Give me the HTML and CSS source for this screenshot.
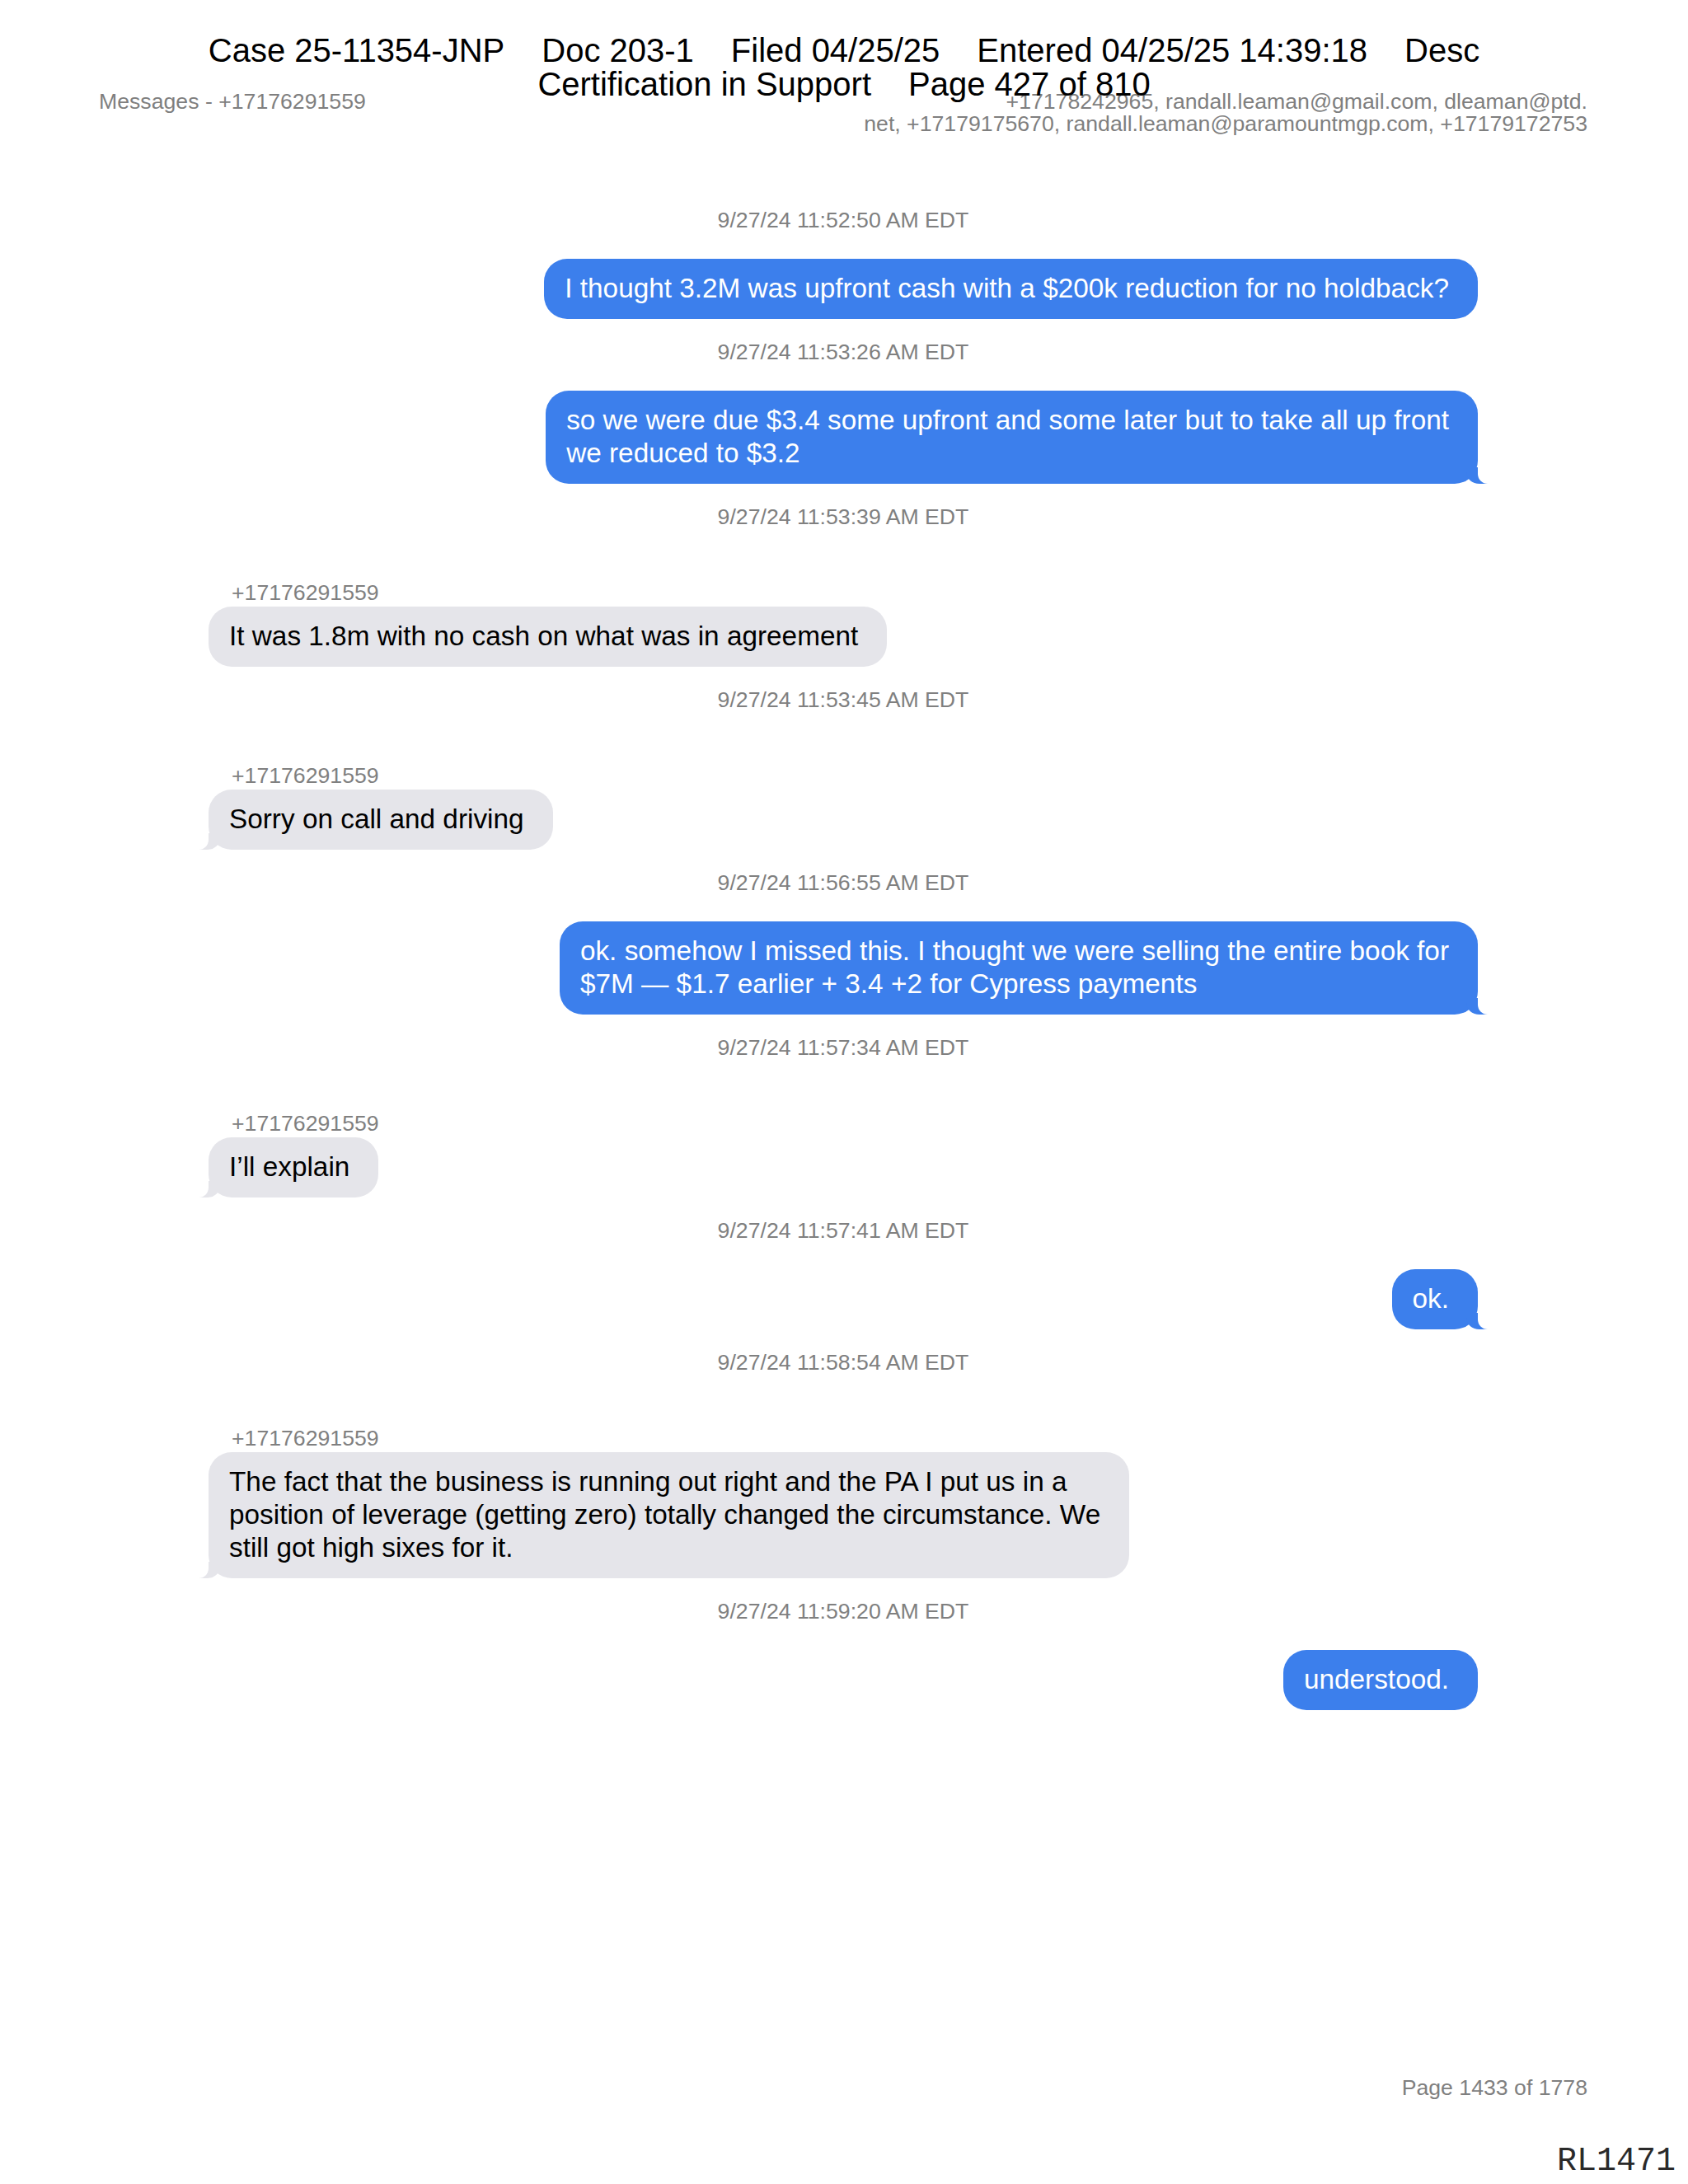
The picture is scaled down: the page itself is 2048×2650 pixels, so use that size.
FILE: index.html
```html
<!DOCTYPE html>
<html lang="en">
<head>
<meta charset="utf-8">
<title>Messages - +17176291559</title>
<link rel="stylesheet" href="styles.css">
</head>
<body>
<div class="page">
  <div class="court-stamp">
    <div class="stamp-line"><span>Case 25-11354-JNP</span><span>Doc 203-1</span><span>Filed 04/25/25</span><span>Entered 04/25/25 14:39:18</span><span>Desc</span></div>
    <div class="stamp-line"><span>Certification in Support</span><span>Page 427 of 810</span></div>
  </div>

  <header class="doc-head">
    <div class="doc-title">Messages - +17176291559</div>
    <div class="participants">
      <span>+17178242965, randall.leaman@gmail.com, dleaman@ptd.</span>
      <span>net, +17179175670, randall.leaman@paramountmgp.com, +17179172753</span>
    </div>
  </header>

  <main class="chat">
    <div class="ts first">9/27/24 11:52:50 AM EDT</div>
    <div class="bubble sent">I thought 3.2M was upfront cash with a $200k reduction for no holdback?</div>

    <div class="ts">9/27/24 11:53:26 AM EDT</div>
    <div class="bubble sent tail">so we were due $3.4 some upfront and some later but to take all up front<br>we reduced to $3.2</div>

    <div class="ts">9/27/24 11:53:39 AM EDT</div>
    <div class="sender">+17176291559</div>
    <div class="bubble recv">It was 1.8m with no cash on what was in agreement</div>

    <div class="ts">9/27/24 11:53:45 AM EDT</div>
    <div class="sender">+17176291559</div>
    <div class="bubble recv tail">Sorry on call and driving</div>

    <div class="ts">9/27/24 11:56:55 AM EDT</div>
    <div class="bubble sent tail">ok. somehow I missed this. I thought we were selling the entire book for<br>$7M — $1.7 earlier + 3.4 +2 for Cypress payments</div>

    <div class="ts">9/27/24 11:57:34 AM EDT</div>
    <div class="sender">+17176291559</div>
    <div class="bubble recv tail">I’ll explain</div>

    <div class="ts">9/27/24 11:57:41 AM EDT</div>
    <div class="bubble sent tail">ok.</div>

    <div class="ts">9/27/24 11:58:54 AM EDT</div>
    <div class="sender">+17176291559</div>
    <div class="bubble recv tail">The fact that the business is running out right and the PA I put us in a<br>position of leverage (getting zero) totally changed the circumstance. We<br>still got high sixes for it.</div>

    <div class="ts">9/27/24 11:59:20 AM EDT</div>
    <div class="bubble sent">understood.</div>
  </main>

  <footer class="page-foot">Page 1433 of 1778</footer>
  <div class="bates">RL1471</div>
</div>
</body>
</html>
```

FILE: styles.css
```css
html, body {
  margin: 0;
  padding: 0;
  background: #ffffff;
}

body {
  font-family: "Liberation Sans", Arial, Helvetica, sans-serif;
}

.page {
  position: relative;
  box-sizing: border-box;
  min-height: 2650px;
  padding: 110px 122px 103px 120px;
  display: flex;
  flex-direction: column;
}

/* court filing stamp laid over the page top */
.court-stamp {
  position: absolute;
  top: 41px;
  left: 0;
  right: 0;
  font-size: 40px;
  line-height: 41px;
  color: #000000;
}

.stamp-line {
  display: flex;
  justify-content: center;
  gap: 45px;
  white-space: nowrap;
}

.doc-head {
  display: flex;
  justify-content: space-between;
  align-items: flex-start;
  font-size: 26.67px;
  line-height: 27px;
  color: #7f7f7f;
}

.participants {
  display: flex;
  flex-direction: column;
  align-items: flex-end;
  white-space: nowrap;
}

.chat {
  display: flex;
  flex-direction: column;
  padding: 88px 133px 0 133px;
}

.ts {
  align-self: center;
  margin-top: 25px;
  font-size: 26.67px;
  line-height: 30px;
  color: #808080;
}

.ts.first {
  margin-top: 0;
}

.sender {
  align-self: flex-start;
  margin-top: 62px;
  padding-left: 28px;
  font-size: 26.67px;
  line-height: 30px;
  color: #808080;
}

.bubble {
  position: relative;
  max-width: 1100px;
  padding: 16px 35px 17px 25px;
  border-radius: 28px;
  font-size: 33.33px;
  line-height: 40px;
}

.bubble.sent {
  align-self: flex-end;
  margin-top: 32px;
  background: #3c7fec;
  color: #ffffff;
}

.bubble.recv {
  align-self: flex-start;
  margin-top: 2px;
  background: #e5e5ea;
  color: #000000;
}

/* speech tails */
.bubble.tail::before,
.bubble.tail::after {
  content: "";
  position: absolute;
  bottom: 0;
}

.bubble.sent.tail::before {
  right: -12px;
  width: 26px;
  height: 20px;
  background: #3c7fec;
  border-bottom-left-radius: 16px 14px;
}

.bubble.sent.tail::after {
  right: -14px;
  width: 14px;
  height: 20px;
  background: #ffffff;
  border-bottom-left-radius: 12px;
}

.bubble.recv.tail::before {
  left: -12px;
  width: 26px;
  height: 20px;
  background: #e5e5ea;
  border-bottom-right-radius: 16px 14px;
}

.bubble.recv.tail::after {
  left: -14px;
  width: 14px;
  height: 20px;
  background: #ffffff;
  border-bottom-right-radius: 12px;
}

.page-foot {
  margin-top: auto;
  align-self: flex-end;
  font-size: 26.67px;
  line-height: 27px;
  color: #7f7f7f;
}

/* bates number stamp */
.bates {
  position: absolute;
  right: 15px;
  bottom: 5px;
  font-family: "Liberation Mono", "Courier New", monospace;
  font-size: 40px;
  line-height: 45px;
  color: #2a2a2a;
}
```
